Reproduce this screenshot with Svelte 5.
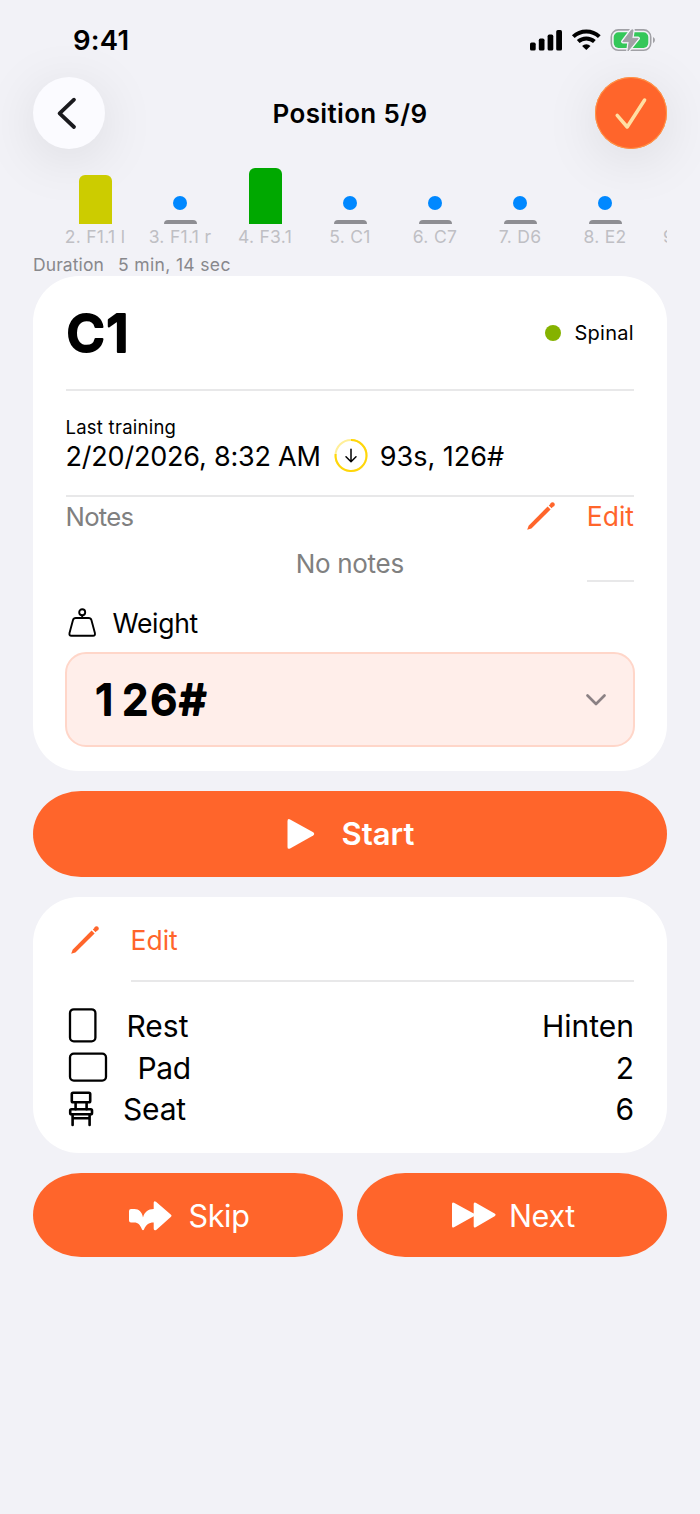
<script lang="ts">
  type Position = { label: string; height?: number; color?: string };

  const positions: Position[] = [
    { label: '1. A1' },
    { label: '2. F1.1 l', height: 49, color: '#cccc00' },
    { label: '3. F1.1 r' },
    { label: '4. F3.1', height: 56, color: '#00a800' },
    { label: '5. C1' },
    { label: '6. C7' },
    { label: '7. D6' },
    { label: '8. E2' },
    { label: '9. F2.1' },
  ];

  const bolt = 'M21.6.9 12.8 12.6H19.2L18 21.9 28.2 9.4H21.8L23 .9Z';

  let weight = $state('126#');
</script>

{#snippet pencil()}
  <svg class="pencil" width="28" height="28" viewBox="0 0 28 28" fill="currentColor">
    <path d="M.2 27.8 1.6 23.7 20.6 4.5 23.6 7.4 4.4 26.5Z" />
    <path d="M21.8 3.5 23.4 1.9V1.2Q25.6-.6 27.3.9 28.6 2.6 27 4.5H26.2L24.6 6.3Z" />
  </svg>
{/snippet}

<main class="screen">
  <div class="status">
    <span class="time">9:41</span>
    <div class="indicators">
      <svg width="33" height="21" viewBox="0 0 33 21">
        <rect x="0" y="12.6" width="5.7" height="8" rx="1.6" />
        <rect x="8.8" y="8.6" width="5.7" height="12" rx="1.6" />
        <rect x="17.6" y="4.6" width="5.7" height="16" rx="1.6" />
        <rect x="26.2" y="0.1" width="5.8" height="20.5" rx="1.6" />
      </svg>
      <svg width="29" height="22" viewBox="0 0 29 22">
        <path d="M1.3 7.6A18.8 18.8 0 0 1 27.3 7.6M6.2 12.6A12 12 0 0 1 22.4 12.6" fill="none" stroke="#000" stroke-width="4" />
        <path d="M14.3 21 10.1 16.9A6 6 0 0 1 18.5 16.9Z" />
      </svg>
      <svg width="46" height="23" viewBox="0 0 46 23">
        <rect x="1.3" y=".9" width="39.4" height="20.4" rx="7" fill="none" stroke="#a1a1a6" stroke-width="1.6" />
        <rect x="3.7" y="3.3" width="34.6" height="15.6" rx="4.8" fill="#34c759" />
        <path d="M43 8Q45 9 45 11.1T43 14.2Z" fill="#a1a1a6" />
        <path d={bolt} stroke="#f2f2f7" stroke-width="3.6" stroke-linejoin="round" />
        <path d={bolt} fill="#a1a1a6" stroke="#a1a1a6" stroke-width="1" stroke-linejoin="round" />
      </svg>
    </div>
  </div>

  <header>
    <button class="round back" aria-label="Back">
      <svg width="72" height="72" viewBox="0 0 72 72">
        <path d="M41 22.7 26.6 36.4 41 50" fill="none" stroke="#1a1a1e" stroke-width="3.8" stroke-linecap="round" stroke-linejoin="round" />
      </svg>
    </button>
    <h1>Position 5/9</h1>
    <button class="round done" aria-label="Done">
      <svg width="72" height="72" viewBox="0 0 72 72">
        <path d="M22.2 38.3 32.2 50 49.6 23" fill="none" stroke="#ffdfa3" stroke-width="3.5" stroke-linecap="round" stroke-linejoin="round" />
      </svg>
    </button>
  </header>

  <div class="chart">
    {#each positions as p}
      <div class="column">
        {#if p.height}
          <div class="bar" style="height: {p.height}px; background: {p.color}"></div>
        {:else}
          <div class="dot"></div>
          <div class="base"></div>
        {/if}
        <span class="tick">{p.label}</span>
      </div>
    {/each}
  </div>
  <p class="duration"><span>Duration</span><span class="value">5 min, 14 sec</span></p>

  <section class="card exercise">
    <div class="title">
      <svg class="name" width="80" height="60">
        <text x="0.5" y="49.2">C1</text>
      </svg>
      <span class="group"><i></i>Spinal</span>
    </div>
    <hr />
    <div class="last">
      <div class="caption">Last training</div>
      <div class="result">
        <span class="date">2/20/2026, 8:32 AM</span>
        <svg width="34" height="34" viewBox="0 0 34 34" fill="none">
          <circle cx="17" cy="16.5" r="15.5" stroke="#ffef99" stroke-width="2" />
          <path d="M17 1A15.5 15.5 0 1 1 1.6 15" stroke="#ffd60a" stroke-width="2" />
          <path d="M17 10.3V22.5M12 17.8 17 22.7 22 17.8" stroke="#000" stroke-width="1.5" stroke-linecap="round" stroke-linejoin="round" />
        </svg>
        <span>93s, 126#</span>
      </div>
    </div>
    <hr />
    <div class="notes-head">
      <span>Notes</span>
      <button class="edit">{@render pencil()}<span>Edit</span></button>
    </div>
    <div class="no-notes">No notes</div>
    <hr class="short" />
    <div class="weight">
      <svg width="30" height="30" viewBox="0 0 30 30" fill="none" stroke="#000" stroke-width="1.9" stroke-linejoin="round">
        <circle cx="14.2" cy="4.2" r="3" />
        <path d="M14.2 7.2V10M7.8 10H20.6Q22.8 10 23.4 12.1L26.9 25.1Q27.4 27.8 25 27.8H3.4Q1 27.8 1.5 25.1L5 12.1Q5.6 10 7.8 10Z" />
      </svg>
      <span>Weight</span>
    </div>
    <button class="select" aria-label="Weight">
      <svg class="amount" width="130" height="60">
        <text x="0.5 27 55.2 84" y="45.2">{weight}</text>
      </svg>
      <svg width="22" height="14" viewBox="0 0 22 14">
        <path d="M2.5 2.5 11 11 19.5 2.5" fill="none" stroke="#8b8184" stroke-width="2.7" stroke-linecap="round" stroke-linejoin="round" />
      </svg>
    </button>
  </section>

  <button class="pill start">
    <svg width="28" height="32" viewBox="0 0 28 32" fill="#fff">
      <path d="M.5 3Q.5.3 3.1 1.4L26.2 14.2Q28.2 15.9 26.2 17.4L3.1 30.5Q.5 31.6.5 28.9Z" />
    </svg>
    <span>Start</span>
  </button>

  <section class="card settings">
    <button class="edit">{@render pencil()}<span>Edit</span></button>
    <hr />
    <dl>
      <div class="row rest">
        <svg width="40" height="36" viewBox="0 0 40 36" fill="none" stroke="#000" stroke-width="2.3">
          <rect x="2" y="1.3" width="25.4" height="32" rx="3.8" />
        </svg>
        <dt>Rest</dt>
        <dd>Hinten</dd>
      </div>
      <div class="row pad">
        <svg width="40" height="32" viewBox="0 0 40 32" fill="none" stroke="#000" stroke-width="2.3">
          <rect x="2" y="1.6" width="36" height="27" rx="3.8" />
        </svg>
        <dt>Pad</dt>
        <dd>2</dd>
      </div>
      <div class="row seat">
        <svg width="40" height="36" viewBox="0 0 40 36" fill="none" stroke="#000" stroke-width="2.6" stroke-linejoin="round" stroke-linecap="round">
          <rect x="3.8" y="1.8" width="18.4" height="9.4" rx="1.3" />
          <path d="M7.6 11.2V18.2M18.6 11.2V18.2M4.6 23.2V34M21.6 23.2V34M4.6 27.2H21.6" />
          <rect x="2.2" y="18.2" width="21.8" height="5" rx="1.3" />
        </svg>
        <dt>Seat</dt>
        <dd>6</dd>
      </div>
    </dl>
  </section>

  <div class="actions">
    <button class="pill skip">
      <svg width="43" height="30" viewBox="0 0 43 30" fill="#fff">
        <path d="M2 8H5.5C10 8 13 11 14 16.5 15.5 11 19 8 24.7 8V1.8Q24.7-.6 27 .8L42 13.8Q43.2 14.7 42 15.7L27.5 28.8Q24.7 30.3 24.7 27.6V21.5C19.5 21.5 17 24 15 28.4Q14 30 13 28.4C11 24 9.5 21.5 5 21.5H2Q0 21.5 0 19.5V10Q0 8 2 8Z" />
      </svg>
      <span>Skip</span>
    </button>
    <button class="pill next">
      <svg width="44" height="26" viewBox="0 0 44 26" fill="#fff">
        <path d="M0 2Q0-.2 2 .8L21.7 11.6V2Q21.7-.2 23.7.8L43 11.7Q44.4 12.8 43 13.9L23.7 25.2Q21.7 26.2 21.7 24V14.2L2 25.2Q0 26.2 0 24Z" />
      </svg>
      <span>Next</span>
    </button>
  </div>
</main>

<style>
  :global(body) {
    background: #f2f2f7;
  }

  .screen {
    width: 700px;
    height: 1514px;
    overflow: hidden;
    background: #f2f2f7;
    color: #000;
    font-family: Inter, "Liberation Sans", sans-serif;
    white-space: nowrap;
  }

  .screen *, .screen {
    box-sizing: border-box;
  }

  svg {
    display: block;
    flex: none;
    overflow: visible;
  }

  button {
    font: inherit;
    color: inherit;
    border: 0;
    padding: 0;
    margin: 0;
    background: none;
  }

  h1, p, dl, dt, dd {
    margin: 0;
    font-weight: 400;
  }

  hr {
    border: 0;
    height: 2px;
    margin: 0;
    background: #e8e8e9;
  }

  .status {
    height: 77px;
    padding: 3px 44px 0 73px;
    display: flex;
    align-items: center;
    justify-content: space-between;
  }

  .time {
    font-size: 27.5px;
    font-weight: 600;
    letter-spacing: 0.2px;
  }

  .indicators {
    display: flex;
    align-items: center;
    gap: 9px;
  }

  header {
    height: 72px;
    padding: 0 33px;
    display: flex;
    align-items: center;
    justify-content: space-between;
  }

  h1 {
    font-size: 26px;
    font-weight: 600;
    letter-spacing: 0.35px;
  }

  .round {
    width: 72px;
    height: 72px;
    border-radius: 50%;
    box-shadow: 0 10px 56px rgba(0, 0, 0, 0.1);
  }

  .back {
    background: #fbfbff;
  }

  .done {
    background: #ff652b;
    box-shadow: inset 0 0 0 1px #ff9648, 0 10px 56px rgba(0, 0, 0, 0.1);
  }

  .chart {
    height: 98px;
    margin: 0 33px;
    padding-top: 15px;
    display: flex;
    overflow: hidden;
  }

  .column {
    flex: 0 0 85px;
    height: 83px;
    display: flex;
    flex-direction: column;
    align-items: center;
    justify-content: flex-end;
  }

  .column:first-child {
    margin-left: -65.5px;
  }

  .bar {
    width: 33px;
    border-radius: 6px 6px 0 0;
  }

  .dot {
    width: 14px;
    height: 14px;
    border-radius: 50%;
    background: #0088ff;
  }

  .base {
    width: 33px;
    height: 4px;
    margin-top: 10px;
    border-radius: 4px 4px 0 0;
    background: #8e8e93;
  }

  .tick {
    height: 23px;
    line-height: 26px;
    font-size: 17.5px;
    letter-spacing: 0.3px;
    color: #bfbfc4;
  }

  .duration {
    height: 29px;
    padding: 2px 0 0 33px;
    line-height: 31px;
    font-size: 17.5px;
    letter-spacing: 0.1px;
    color: #88888c;
    display: flex;
    gap: 14px;
  }

  .value {
    letter-spacing: 0.35px;
  }

  .card {
    margin: 0 33px;
    padding: 0 33px 0 32.5px;
    border-radius: 46px;
    background: #fff;
  }

  .exercise {
    height: 494.5px;
  }

  .title {
    height: 113px;
    display: flex;
    align-items: center;
    justify-content: space-between;
  }

  .name text {
    font-size: 52px;
    font-weight: 620;
    letter-spacing: 1.8px;
    stroke: #000;
    stroke-width: 2.2px;
    stroke-linejoin: round;
  }

  .group {
    display: flex;
    align-items: center;
    gap: 13px;
    font-size: 20px;
    letter-spacing: 0.3px;
  }

  .group i {
    width: 16px;
    height: 16px;
    border-radius: 50%;
    background: #85b200;
  }

  .last {
    height: 104px;
    padding-top: 24px;
  }

  .caption {
    height: 24px;
    line-height: 24px;
    font-size: 18.5px;
    letter-spacing: 0.25px;
  }

  .result {
    height: 34px;
    display: flex;
    align-items: center;
    font-size: 27px;
  }

  .date {
    letter-spacing: -0.2px;
  }

  .result svg {
    margin: 0 12px 0 13px;
  }

  .notes-head {
    height: 38px;
    display: flex;
    align-items: center;
    justify-content: space-between;
    font-size: 25.7px;
    letter-spacing: -0.7px;
    color: #808080;
  }

  .edit {
    display: flex;
    align-items: center;
    gap: 32px;
    font-size: 26.5px;
    letter-spacing: 0;
    color: #ff652b;
  }

  .no-notes {
    height: 45px;
    padding-top: 12px;
    line-height: 33px;
    font-size: 26px;
    letter-spacing: -0.3px;
    color: #808080;
    text-align: center;
  }

  .short {
    width: 47.5px;
    margin-left: auto;
  }

  .weight {
    height: 70px;
    padding: 12px 0 0 2.5px;
    display: flex;
    align-items: center;
    gap: 14.5px;
    font-size: 26.5px;
    letter-spacing: -0.3px;
  }

  .select {
    width: 570px;
    height: 95px;
    margin-left: -0.5px;
    padding: 0 26px 0 28px;
    display: flex;
    align-items: center;
    justify-content: space-between;
    border: 2px solid #ffd6c9;
    border-radius: 21px;
    background: #ffeeea;
  }

  .amount text {
    font-size: 43px;
    font-weight: 480;
    stroke: #000;
    stroke-width: 1.8px;
    stroke-linejoin: round;
  }

  .pill {
    display: flex;
    align-items: center;
    justify-content: center;
    color: #fff;
    background: #ff652b;
    font-size: 31px;
  }

  .start {
    width: 634px;
    height: 86px;
    margin: 20.5px 33px 20px;
    padding: 0 0 1px 1px;
    gap: 27px;
    border-radius: 48px / 43px;
    font-weight: 600;
  }

  .settings {
    height: 256px;
  }

  .settings .edit {
    height: 83px;
    padding: 2px 0 0 5px;
  }

  .settings hr {
    margin-left: 65px;
  }

  dl {
    padding-top: 23.3px;
    font-size: 30px;
  }

  .row {
    height: 41.5px;
    display: flex;
    align-items: center;
    padding-left: 2px;
  }

  dd {
    margin-left: auto;
  }

  .rest dt {
    margin-left: 19px;
  }

  .pad dt {
    margin-left: 30px;
    letter-spacing: -0.4px;
  }

  .seat dt {
    margin-left: 15.5px;
    letter-spacing: -0.2px;
  }

  .actions {
    display: flex;
    gap: 14px;
    padding: 20px 33px 0;
  }

  .actions .pill {
    flex: 1;
    height: 84px;
    padding-left: 3px;
    gap: 16px;
    border-radius: 48px / 42px;
    font-size: 30.5px;
    letter-spacing: -0.3px;
  }

  .actions .next {
    gap: 13px;
  }

  .skip svg {
    margin-top: 1px;
  }
</style>
